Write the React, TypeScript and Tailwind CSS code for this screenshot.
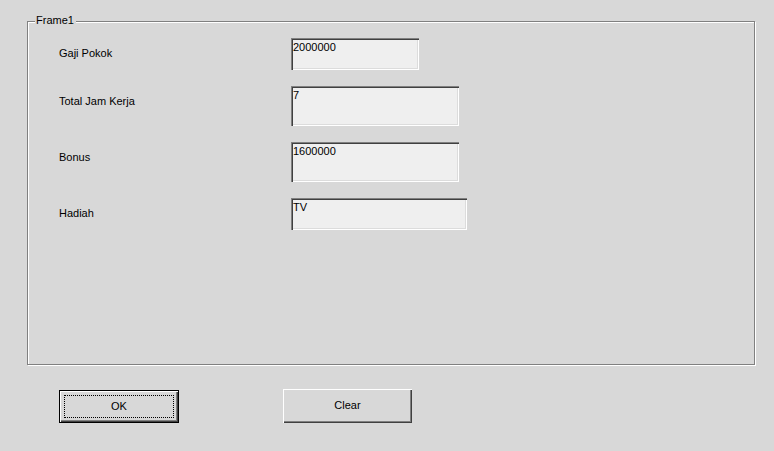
import React from 'react';

interface FieldProps {
  label: string;
  value: string;
  width: string;
  height: string;
}

const fields: FieldProps[] = [
  { label: 'Gaji Pokok', value: '2000000', width: 'w-[128px]', height: 'h-[32px]' },
  { label: 'Total Jam Kerja', value: '7', width: 'w-[168px]', height: 'h-[40px]' },
  { label: 'Bonus', value: '1600000', width: 'w-[168px]', height: 'h-[40px]' },
  { label: 'Hadiah', value: 'TV', width: 'w-[176px]', height: 'h-[32px]' },
];

function Field({ label, value, width, height }: FieldProps) {
  return (
    <div className="flex items-start">
      {/* label column */}
      <div className="w-[232px] pt-[9px] leading-[13px]">{label}</div>
      {/* sunken text box */}
      <div
        className={`${width} ${height} bg-[#efefef] pt-[3px] pl-[2px] leading-[13px] shadow-[inset_1px_1px_0_#808080,inset_2px_2px_0_#404040,inset_-1px_-1px_0_#ffffff,inset_-2px_-2px_0_#dcdcdc]`}
      >
        {value}
      </div>
    </div>
  );
}

export default function App() {
  return (
    <div className="w-[774px] h-[451px] bg-[#d8d8d8] text-black text-[11px] font-['Liberation_Sans',Arial,sans-serif] pt-[21px] pl-[27px]">
      {/* Frame1 */}
      <div className="relative w-[728px] h-[344px] border border-[#808080] shadow-[inset_1px_1px_0_#ffffff,1px_1px_0_#ffffff] pt-[16px] pl-[31px]">
        <span className="absolute left-[7px] top-[-8px] bg-[#d8d8d8] pl-[1px] pr-[2px] leading-[13px]">Frame1</span>
        <div className="flex flex-col gap-[16px]">
          {fields.map((f) => (
            <Field key={f.label} {...f} />
          ))}
        </div>
      </div>

      {/* buttons */}
      <div className="flex items-start gap-[104px] mt-[24px] pl-[32px]">
        <button className="mt-[1px] w-[120px] h-[33px] border border-black bg-[#d8d8d8] p-[4px] shadow-[inset_1px_1px_0_#ffffff,inset_-1px_-1px_0_#404040,inset_-2px_-2px_0_#808080]">
          <div className="w-full h-full border border-dotted border-black flex items-center justify-center leading-[13px]">
            OK
          </div>
        </button>
        <button className="w-[129px] h-[34px] bg-[#d8d8d8] pb-[1px] flex items-center justify-center leading-[13px] shadow-[inset_1px_1px_0_#ffffff,inset_-1px_-1px_0_#404040,inset_-2px_-2px_0_#808080]">
          Clear
        </button>
      </div>
    </div>
  );
}
